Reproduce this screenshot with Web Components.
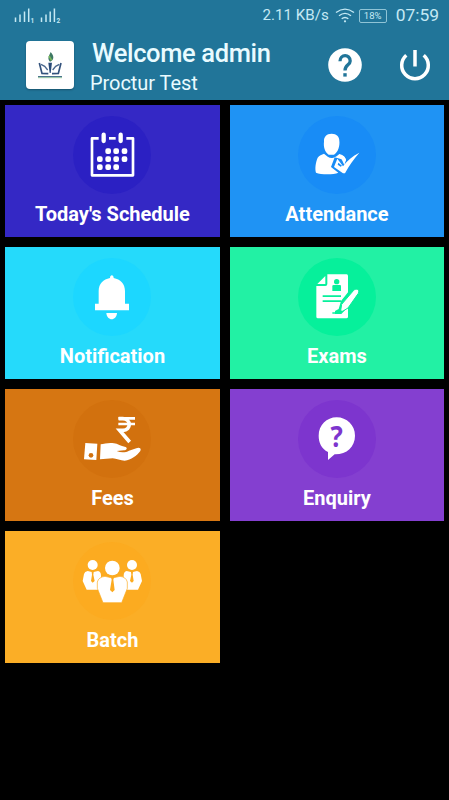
<!DOCTYPE html>
<html lang="en">
<head>
<meta charset="UTF-8">
<meta name="viewport" content="width=device-width, initial-scale=1.0">
<title>Proctur</title>
<style>
    body {
        margin: 0;
        background: #000;
        font-family: Roboto, "Noto Sans", sans-serif;
        --header-color: #217599;
        --header-text: #e9fbff;
    }
</style>
</head>
<body>
<admin-dashboard></admin-dashboard>

<script>
const ICONS = {
    schedule: `
        <g fill="none" stroke="#fff" stroke-width="8">
            <path d="M77 67H57V178H180V67H160" stroke-linejoin="round"/>
            <path d="M108 67H128"/>
            <path d="M92 56V75M143 56V75" stroke-width="13" stroke-linecap="round"/>
        </g>
        <path fill="none" stroke="#fff" stroke-width="12" stroke-linejoin="round"
            d="M103 103h5v5h-5zM127 103h5v5h-5zM152 103h5v5h-5z
               M78 127h5v5h-5zM103 127h5v5h-5zM127 127h5v5h-5zM152 127h5v5h-5z
               M78 151h5v5h-5zM103 151h5v5h-5zM127 151h5v5h-5z"/>`,
    attendance: `
        <path d="M101 53C116 53 124 62 124 74C126 88 121 108 108 116H92C80 108 76 91 78 77C77 63 85 53 101 53Z"/>
        <path d="M78 113C86 120 94 127 103 126C111 126 119 119 124 114C137 117 142 124 144 132L139 147L131 130L110 124L99 153L121 170C105 177 68 176 54 170C50 159 53 138 59 125C64 118 71 116 78 113Z"/>
        <path d="M118 128L135 151C148 134 163 120 184 110C168 129 153 149 141 172H135L108 153Z"/>
        <path d="M123 116C135 117 141 124 144 131L139 138L125 124Z"/>
        <path fill="var(--badge-color)" d="M121 140L132 149L128 152L119 146Z"/>`,
    notification: `
        <path d="M111 60C111 49 122 49 122 60C142 64 156 77 156 99V137H168V157H66V137H77V99C77 77 91 64 111 60Z"/>
        <path d="M100 165H132C130 190 102 190 100 165Z"/>`,
    exams: `
        <path d="M88 49H146Q150 49 150 54V103L129 129L122 153L111 159V168H130L150 147V176Q150 181 145 181H60Q55 181 55 176V84H82Q88 84 88 78Z"/>
        <path d="M82 54V78H58Z"/>
        <g fill="var(--badge-color)">
            <circle cx="116" cy="71" r="8"/>
            <path d="M103 84Q103 81 107 81H126Q129 81 129 85V99H103Z"/>
            <path d="M74 112H129V117H74ZM74 127H129V132H74Z"/>
        </g>
        <path stroke="var(--badge-color)" stroke-width="3" d="M127 164L131 139L167 97C173 91 187 93 181 106L150 150Z"/>
        <path fill="none" stroke="var(--badge-color)" stroke-width="4" d="M103 165H126L133 158"/>`,
    fees: `
        <path d="M37 129L73 131L70 180L33 178Z"/>
        <circle cx="54" cy="166" r="7" fill="var(--badge-color)"/>
        <path d="M83 133C94 132 107 127 123 130C133 131 145 139 155 140C164 142 163 150 153 151L131 153C145 159 159 157 168 152L190 145C198 141 206 145 202 153C191 168 175 179 155 182C143 182 130 176 119 175L81 178Z"/>
        <g fill="none" stroke="#fff" stroke-width="8">
            <path d="M136 55H186M136 72H186"/>
            <path d="M137 56H149C175 56 175 91 150 91H140L170 126" stroke-width="11"/>
        </g>`,
    enquiry: `
        <path d="M116 52C146 52 171 76 171 107C171 141 145 164 110 163L90 180V156C70 146 62 127 62 107C62 76 86 52 116 52Z"/>
        <text transform="translate(116 140) scale(0.88 1)" font-size="88" font-weight="700"
            font-family="Open Sans, sans-serif" text-anchor="middle" fill="var(--badge-color)">?</text>`,
    batch: `
        <g>
            <circle cx="59" cy="69" r="15"/>
            <path d="M44 87L59 91L75 87Q84 89 84 101V143H41L29 117L33 96Q35 89 44 87Z"/>
            <path fill="var(--badge-color)" d="M56 90H62L61 98L65 117L59 122L54 117L57 98Z"/>
        </g>
        <g transform="translate(236 0) scale(-1 1)">
            <circle cx="59" cy="69" r="15"/>
            <path d="M44 87L59 91L75 87Q84 89 84 101V143H41L29 117L33 96Q35 89 44 87Z"/>
            <path fill="var(--badge-color)" d="M56 90H62L61 98L65 117L59 122L54 117L57 98Z"/>
        </g>
        <circle cx="118" cy="78" r="22"/>
        <path stroke="var(--badge-color)" stroke-width="2"
            d="M96 103L118 108L141 103Q159 105 163 120V139L146 182H90L73 139V120Q77 105 96 103Z"/>
        <path fill="var(--badge-color)" d="M113 102H124L121 113L125 144L118 151L111 144L116 113Z"/>`
};

const MODULES = [
    { nome: "Today's Schedule", icone: 'schedule', cor: '#3428c5', fundo: '#2b20c3' },
    { nome: 'Attendance', icone: 'attendance', cor: '#1f93f4', fundo: '#188cf6' },
    { nome: 'Notification', icone: 'notification', cor: '#25dafb', fundo: '#1cd7ff' },
    { nome: 'Exams', icone: 'exams', cor: '#22f1a4', fundo: '#06f09b' },
    { nome: 'Fees', icone: 'fees', cor: '#d67612', fundo: '#d2710e' },
    { nome: 'Enquiry', icone: 'enquiry', cor: '#843fd0', fundo: '#7d35ce' },
    { nome: 'Batch', icone: 'batch', cor: '#fbae26', fundo: '#fcab20' }
];

class StatusBar extends HTMLElement {
    constructor() {
        super();
        this.attachShadow({ mode: 'open' });
    }

    connectedCallback() {
        this.shadowRoot.innerHTML = `
            <style>
                :host {
                    display: flex;
                    align-items: center;
                    height: 31px;
                    padding: 0 10px 0 14px;
                    color: #c5e9f4;
                    white-space: nowrap;
                }

                svg {
                    display: block;
                    flex: none;
                }

                .signal {
                    margin-right: auto;
                }

                .speed {
                    font-size: 15.1px;
                    line-height: 31px;
                }

                .wifi {
                    margin: 0 4px 0 6px;
                }

                .battery {
                    box-sizing: border-box;
                    width: 28px;
                    height: 14px;
                    border: 1px solid #8fc4d6;
                    border-radius: 2px;
                    font-size: 9.5px;
                    line-height: 12px;
                    text-align: center;
                }

                .clock {
                    margin-left: 9px;
                    font-size: 17.4px;
                    line-height: 31px;
                }
            </style>

            <svg class="signal" width="48" height="16" viewBox="0 0 48 16" fill="none" stroke="currentColor" stroke-width="1.5">
                <path d="M1.5 14V9.5M6 14V6.5M10.5 14V3.5M14.7 14V0.5M27.5 14V9.5M32 14V6.5M36.2 14V3.5M40.4 14V0.5"/>
                <text x="16.5" y="15" font-size="6.5" font-weight="700" fill="currentColor" stroke="none">1</text>
                <text x="42.5" y="15" font-size="6.5" font-weight="700" fill="currentColor" stroke="none">2</text>
            </svg>
            <span class="speed">2.11 KB/s</span>
            <svg class="wifi" width="20" height="15" viewBox="0 0 20 15" fill="none" stroke="currentColor" stroke-width="1.4">
                <path d="M1 4.5Q10 -2.3 19 4.5M4 7.7Q10 3 16 7.7M6.7 10.8Q10 8 13.3 10.8"/>
                <circle cx="10" cy="13.3" r="1.1" fill="currentColor" stroke="none"/>
            </svg>
            <span class="battery">18%</span>
            <span class="clock">07:59</span>
        `;
    }
}

class AppHeader extends HTMLElement {
    constructor() {
        super();
        this.attachShadow({ mode: 'open' });
    }

    connectedCallback() {
        this.shadowRoot.innerHTML = `
            <style>
                :host {
                    display: block;
                    box-sizing: border-box;
                    height: 100px;
                    background: var(--header-color);
                    color: var(--header-text);
                }

                .row {
                    display: flex;
                    align-items: flex-start;
                    padding: 10px 18px 0 26px;
                }

                .logo {
                    width: 48px;
                    height: 48px;
                    border-radius: 4px;
                    background: #fff;
                    box-shadow: 0 1px 2px rgba(0, 0, 0, 0.3);
                }

                .titles {
                    flex: 1;
                    margin-left: 16px;
                    margin-top: -1px;
                    white-space: nowrap;
                }

                .welcome {
                    padding-left: 2px;
                    font-size: 25.5px;
                    font-weight: 500;
                    letter-spacing: -0.36px;
                    line-height: 26px;
                }

                .institute {
                    padding-top: 5px;
                    font-size: 20px;
                    letter-spacing: -0.05px;
                    line-height: 24px;
                }

                svg {
                    display: block;
                }

                .help {
                    margin: 7px 37px 0 0;
                }

                .power {
                    margin-top: 8px;
                }
            </style>

            <status-bar></status-bar>
            <div class="row">
                <div class="logo">
                    <svg width="48" height="48" viewBox="0 0 144 144" fill="none">
                        <path d="M40 66L48 97L67 98M105 66L97 97L78 98" stroke="#33527c" stroke-width="5"/>
                        <path d="M45 70L56 76L65 87M100 70L89 76L80 87" stroke="#4a688e" stroke-width="4"/>
                        <path d="M67 65H78L74 96H71Z" fill="#284a78"/>
                        <path d="M74 33C89 49 80 60 72 62C63 52 69 46 74 33Z" fill="#3e7864"/>
                        <path d="M69 45L77 58" stroke="#79b95b" stroke-width="5"/>
                        <path d="M36 107H108" stroke="#285978" stroke-width="3"/>
                        <path d="M36 110H108" stroke="#8fc09c" stroke-width="3"/>
                    </svg>
                </div>
                <div class="titles">
                    <div class="welcome"><slot name="welcome"></slot></div>
                    <div class="institute"><slot name="institute"></slot></div>
                </div>
                <svg class="help" width="34" height="34" viewBox="0 0 34 34">
                    <circle cx="17" cy="17" r="16.8" fill="#fff"/>
                    <path d="M12 13.3C12 5.8 22.2 5.8 22.2 13C22.2 17 17 16.8 17 22.5" fill="none" stroke="var(--header-color)" stroke-width="3.3"/>
                    <path d="M15.3 25.2H18.7V28.6H15.3Z" fill="var(--header-color)"/>
                </svg>
                <svg class="power" width="32" height="32" viewBox="0 0 32 32" fill="none" stroke="#fff" stroke-width="3.5">
                    <path d="M16 1V17.5"/>
                    <path d="M7.3 6.3A13.3 13.3 0 1 0 24.7 6.3"/>
                </svg>
            </div>
        `;
    }
}

class ModuleTile extends HTMLElement {
    constructor() {
        super();
        this.attachShadow({ mode: 'open' });
    }

    connectedCallback() {
        this.shadowRoot.innerHTML = `
            <style>
                :host {
                    display: flex;
                    flex-direction: column;
                    align-items: center;
                    box-sizing: border-box;
                    height: 132px;
                    padding-top: 11px;
                    background: var(--tile-color);
                    color: #fff;
                    cursor: pointer;
                }

                .badge {
                    width: 78px;
                    height: 78px;
                    border-radius: 50%;
                    background: var(--badge-color);
                }

                svg {
                    display: block;
                }

                .label {
                    margin-top: 8px;
                    font-size: 20px;
                    font-weight: 700;
                    line-height: 24px;
                    white-space: nowrap;
                }
            </style>

            <div class="badge">
                <svg width="78" height="78" viewBox="0 0 234 234" fill="#fff">
                    ${ICONS[this.getAttribute('icone')]}
                </svg>
            </div>
            <div class="label"><slot></slot></div>
        `;
    }
}

class AdminDashboard extends HTMLElement {
    constructor() {
        super();
        this.attachShadow({ mode: 'open' });
    }

    connectedCallback() {
        this.render();
    }

    render() {
        this.shadowRoot.innerHTML = `
            <style>
                :host {
                    display: block;
                    min-height: 800px;
                    background: #000;
                }

                .grid {
                    display: grid;
                    grid-template-columns: 1fr 1fr;
                    gap: 10px 9.6px;
                    padding: 5px 4.6px 5px 5px;
                }
            </style>

            <app-header>
                <span slot="welcome">Welcome admin</span>
                <span slot="institute">Proctur Test</span>
            </app-header>
            <div class="grid">
                ${this.renderModules()}
            </div>
        `;
    }

    renderModules() {
        return MODULES.map(mod => `
            <module-tile icone="${mod.icone}" style="--tile-color: ${mod.cor}; --badge-color: ${mod.fundo}">${mod.nome}</module-tile>
        `).join('');
    }
}

customElements.define('status-bar', StatusBar);
customElements.define('app-header', AppHeader);
customElements.define('module-tile', ModuleTile);
customElements.define('admin-dashboard', AdminDashboard);
</script>
</body>
</html>
